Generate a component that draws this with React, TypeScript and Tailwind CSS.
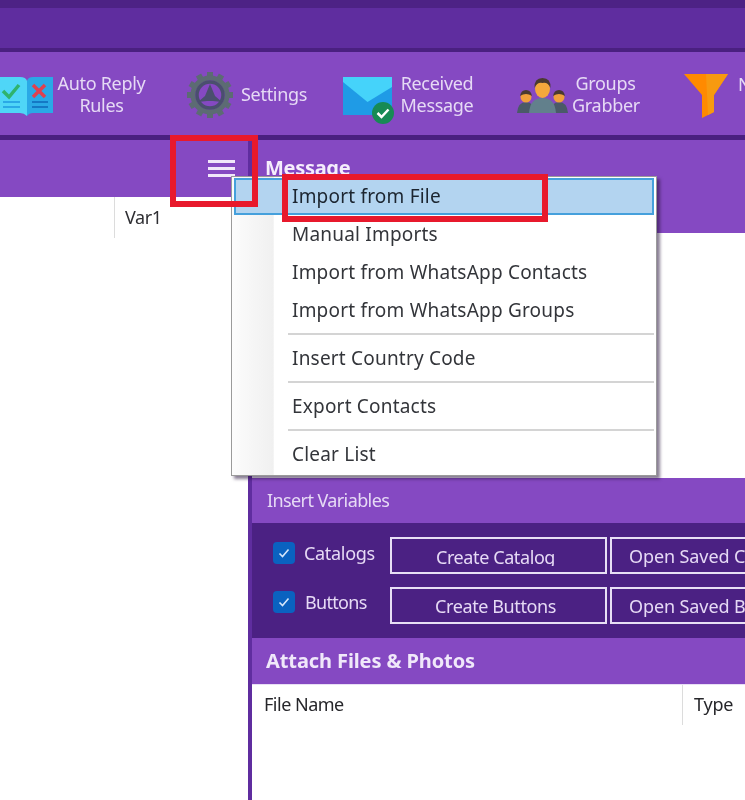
import React from "react";

const FONT = { fontFamily: '"Noto Sans", "Open Sans", sans-serif' };

const BookIcon = () => (
  <svg width="53" height="41" viewBox="0 0 53 41" className="shrink-0">
    <path d="M-6 1H20Q26 1 27 5V40Q24 37 20 37H-6Z" fill="#4fd6f7" />
    <path d="M27 5Q28 1 33 1H53V37H33Q29 37 27 40Z" fill="#2aa9e6" />
    <path d="M3 15L9 21L19 9" fill="none" stroke="#2fb36d" strokeWidth="3.5" />
    <path d="M33 9L45 21M45 9L33 21" fill="none" stroke="#e0404f" strokeWidth="3.5" />
    <path d="M3 26H20M3 31H20" stroke="#2aa9e6" strokeWidth="2" />
    <path d="M32 26H48M32 31H48" stroke="#1478c4" strokeWidth="2" />
  </svg>
);

const GearIcon = () => (
  <svg width="46" height="46" viewBox="0 0 46 46" className="shrink-0">
    <g fill="#5c6b73">
      {[0, 30, 60, 90, 120, 150, 180, 210, 240, 270, 300, 330].map((a) => (
        <rect key={a} x="20" y="0" width="6" height="8" transform={`rotate(${a} 23 23)`} />
      ))}
    </g>
    <circle cx="23" cy="23" r="17" fill="none" stroke="#5c6b73" strokeWidth="5" />
    <circle cx="23" cy="23" r="14.5" fill="#8549c2" />
    <circle cx="23" cy="23" r="13" fill="none" stroke="#4a4f6e" strokeWidth="3.5" />
    <path d="M23 12L28 24L35 30L26 29H20L11 30L18 24Z" fill="#4a4f6e" />
  </svg>
);

const MailIcon = () => (
  <svg width="52" height="48" viewBox="0 0 52 48" className="shrink-0">
    <rect x="0" y="0" width="49" height="38" fill="#1f9be6" />
    <path d="M0 0H49V10L24.5 25L0 5Z" fill="#45d3fa" />
    <circle cx="40" cy="36" r="11" fill="#178a55" />
    <path d="M34.5 36L38.5 40L45.5 32.5" fill="none" stroke="#fff" strokeWidth="2.5" />
  </svg>
);

const PeopleIcon = () => (
  <svg width="51" height="36" viewBox="0 0 51 36" className="shrink-0">
    <path d="M0 35Q1 24 9 24Q17 24 18 35Z" fill="#4a5a68" />
    <path d="M33 35Q34 24 42 24Q50 24 51 35Z" fill="#4a5a68" />
    <circle cx="9" cy="19" r="5.5" fill="#f0a03c" />
    <path d="M3 18Q4 12 9 12Q14 12 15 18Q9 14 3 18Z" fill="#4a3a30" />
    <circle cx="42" cy="19" r="5.5" fill="#f0a03c" />
    <path d="M36 18Q37 12 42 12Q47 12 48 18Q42 14 36 18Z" fill="#4a3a30" />
    <path d="M12 35Q13 20 25.5 20Q38 20 39 35Z" fill="#62808c" />
    <ellipse cx="25.5" cy="11" rx="7.5" ry="9" fill="#f4a83c" />
    <path d="M17.5 10Q17 0 25.5 0Q34 0 33.5 10Q31 4 25.5 5Q20 4 17.5 10Z" fill="#4a3a30" />
  </svg>
);

const FunnelIcon = () => (
  <svg width="44" height="44" viewBox="0 0 44 44" className="shrink-0">
    <path d="M0 0H44L30 21V38L18 44V21Z" fill="#ff8a00" />
    <path d="M22 0H44L30 21V38L24 41Z" fill="#f79a10" />
  </svg>
);

const ToolText = ({ lines, className }: { lines: string[]; className: string }) => (
  <div className={`shrink-0 text-center text-[18px] leading-[22px] tracking-[-0.3px] text-[#e6daf5] ${className}`}>
    {lines.map((l) => (
      <div key={l}>{l}</div>
    ))}
  </div>
);

const Check = () => (
  <span className="flex h-[22px] w-[22px] shrink-0 items-center justify-center rounded-[4px] bg-[#0a62c0]">
    <svg width="14" height="14" viewBox="0 0 14 14">
      <path d="M2.5 7.5L5.5 10.5L11.5 3.5" fill="none" stroke="#d5e6fa" strokeWidth="1.6" />
    </svg>
  </span>
);

const VarButton = ({ label, clip }: { label: string; clip?: boolean }) => (
  <div className="flex h-[37px] w-[217px] shrink-0 items-center justify-center border-2 border-[#e8dff5] pr-[6px] text-[18px] tracking-[-0.4px] text-[#e6daf5]">
    <span className={clip ? "h-[21px] overflow-hidden leading-[24px]" : "h-[24px] leading-[24px]"}>{label}</span>
  </div>
);

const OpenButton = ({ label }: { label: string }) => (
  <div className="flex h-[37px] w-[217px] shrink-0 items-center whitespace-nowrap border-2 border-[#e8dff5] pl-[17px] text-[18px] tracking-[-0.1px] text-[#e6daf5]">
    <span className="leading-[24px]">{label}</span>
  </div>
);

const MenuItem = ({ label, active }: { label: string; active?: boolean }) => (
  <div
    className={
      active
        ? "-mt-[1px] flex h-[37px] items-center border-2 border-[#45a0dc] bg-[#b3d4f0] pl-[56px] text-[#1c2530]"
        : "flex h-[38px] items-center pl-[58px] text-[#33353a]"
    }
  >
    {label}
  </div>
);

const MenuSep = () => (
  <div className="flex h-[10px] items-center pl-[54px]">
    <div className="h-[2px] w-full bg-[#d4d4d4]" />
  </div>
);

export default function App() {
  return (
    <div className="relative h-[800px] w-[745px] overflow-hidden bg-white blur-[0.5px]" style={FONT}>
      <div className="h-[8px] bg-[#4d2285]" />
      <div className="h-[40px] bg-[#5f2d9f]" />
      <div className="h-[4px] bg-[#4a2080]" />

      {/* toolbar */}
      <div className="flex h-[83px] items-center whitespace-nowrap bg-[#8549c2]">
        <div className="mt-[5px] shrink-0"><BookIcon /></div>
        <ToolText lines={["Auto Reply", "Rules"]} className="ml-[4px] w-[89px]" />
        <div className="ml-[41px] mt-[3px] shrink-0"><GearIcon /></div>
        <ToolText lines={["Settings"]} className="ml-[8px] w-[65px]" />
        <div className="ml-[37px] mt-[15px] shrink-0"><MailIcon /></div>
        <ToolText lines={["Received", "Message"]} className="ml-[3px] w-[78px]" />
        <div className="ml-[41px] mt-[4px] shrink-0"><PeopleIcon /></div>
        <ToolText lines={["Groups", "Grabber"]} className="ml-[4px] w-[67px]" />
        <div className="ml-[45px] mt-[5px] shrink-0"><FunnelIcon /></div>
        <ToolText lines={["N"]} className="ml-[10px] -mt-[20px] text-left" />
      </div>
      <div className="h-[5px] bg-[#4a2080]" />

      <div className="flex h-[660px]">
        {/* left list */}
        <div className="w-[248px] shrink-0">
          <div className="flex h-[57px] items-start justify-end bg-[#8549c2] pr-[13px] pt-[20px]">
            <div className="flex w-[27px] flex-col gap-[4px]">
              <div className="h-[3px] bg-[#f0e6fa]" />
              <div className="h-[3px] bg-[#f0e6fa]" />
              <div className="h-[3px] bg-[#f0e6fa]" />
            </div>
          </div>
          <div className="flex h-[41px]">
            <div className="w-[115px] border-r border-[#dcdcdc]" />
            <div className="pl-[10px] pt-[7px] text-[18px] leading-[26px] tracking-[-0.4px] text-[#2f2f33]">Var1</div>
          </div>
        </div>

        {/* message column */}
        <div className="flex min-w-0 flex-1 flex-col border-l-[4px] border-[#5f2d9f]">
          <div className="h-[93px] bg-[#8549c2] pl-[13px] pt-[15px] text-[20px] font-bold leading-[26px] tracking-[-0.3px] text-[#f5eefc]">
            Message
          </div>
          <div className="h-[245px] bg-white" />
          <div className="flex h-[45px] items-center bg-[#8549c2] pl-[15px] text-[18px] tracking-[-0.6px] text-[#e6daf5]">
            Insert Variables
          </div>
          <div className="flex h-[115px] flex-col gap-[13px] bg-[#4b2183] pl-[21px] pt-[14px]">
            <div className="flex">
              <div className="mt-[5px] flex w-[117px] shrink-0 gap-[9px] text-[18px] leading-[22px] tracking-[-0.3px] text-[#e6daf5]">
                <Check />
                <span>Catalogs</span>
              </div>
              <div className="flex gap-[3px]">
                <VarButton label="Create Catalog" clip />
                <OpenButton label="Open Saved Catalogs" />
              </div>
            </div>
            <div className="flex">
              <div className="mt-[4px] flex w-[117px] shrink-0 gap-[10px] text-[18px] leading-[22px] tracking-[-0.7px] text-[#e6daf5]">
                <Check />
                <span>Buttons</span>
              </div>
              <div className="flex gap-[3px]">
                <VarButton label="Create Buttons" />
                <OpenButton label="Open Saved Buttons" />
              </div>
            </div>
          </div>
          <div className="flex h-[46px] items-center bg-[#8549c2] pl-[14px] text-[20px] font-bold tracking-[-0.1px] text-[#f0e8fa]">
            Attach Files &amp; Photos
          </div>
          <div className="flex h-[41px] border-t border-[#e8dff5] text-[18px] tracking-[-0.5px] text-[#26262a]">
            <div className="w-[431px] border-r border-[#dcdcdc] pl-[12px] pt-[6px] leading-[26px]">File Name</div>
            <div className="pl-[11px] pt-[6px] leading-[26px] tracking-[-0.2px]">Type</div>
          </div>
        </div>
      </div>

      {/* context menu */}
      <div className="absolute left-[231px] top-[176px] h-[300px] w-[426px] border border-[#9a9a9a] bg-[linear-gradient(90deg,#fcfcfc_0%,#f0f0f0_9.7%,#ffffff_10%)] px-[2px] pt-[2px] text-[19px] tracking-[0.2px] shadow-[3px_3px_3px_rgba(40,20,60,0.55)]">
        <MenuItem label="Import from File" active />
        <MenuItem label="Manual Imports" />
        <MenuItem label="Import from WhatsApp Contacts" />
        <MenuItem label="Import from WhatsApp Groups" />
        <MenuSep />
        <MenuItem label="Insert Country Code" />
        <MenuSep />
        <MenuItem label="Export Contacts" />
        <MenuSep />
        <MenuItem label="Clear List" />
      </div>

      {/* red annotations */}
      <div className="absolute left-[170px] top-[135px] h-[72px] w-[88px] border-[6px] border-[#e8192c]" />
      <div className="absolute left-[282px] top-[174px] h-[48px] w-[266px] border-[6px] border-[#e8192c]" />
    </div>
  );
}
